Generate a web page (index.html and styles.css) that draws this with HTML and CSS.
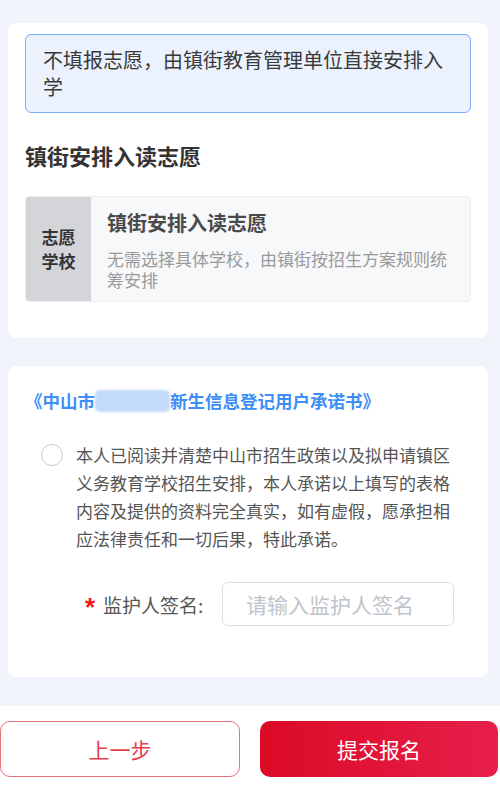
FILE: index.html
```html
<!DOCTYPE html>
<html lang="zh">
<head>
<meta charset="utf-8">
<title>志愿填报</title>
<link rel="stylesheet" href="styles.css">
</head>
<body>
<div class="page">
  <section class="card card-top">
    <div class="notice">不填报志愿，由镇街教育管理单位直接安排入学</div>
    <h2 class="section-title">镇街安排入读志愿</h2>
    <div class="option">
      <div class="option-label">志愿<br>学校</div>
      <div class="option-body">
        <div class="option-title">镇街安排入读志愿</div>
        <div class="option-desc">无需选择具体学校，由镇街按招生方案规则统筹安排</div>
      </div>
    </div>
  </section>

  <section class="card card-pledge">
    <div class="pledge-link">《中山市<span class="masked"></span>新生信息登记用户承诺书》</div>
    <div class="agree-row">
      <span class="radio"></span>
      <p class="agree-text">本人已阅读并清楚中山市招生政策以及拟申请镇区义务教育学校招生安排，本人承诺以上填写的表格内容及提供的资料完全真实，如有虚假，愿承担相应法律责任和一切后果，特此承诺。</p>
    </div>
    <div class="sign-row">
      <span class="required">*</span>
      <span class="sign-label">监护人签名:</span>
      <div class="sign-input">请输入监护人签名</div>
    </div>
  </section>
</div>
<footer class="bottom-bar">
  <button class="btn btn-prev">上一步</button>
  <button class="btn btn-submit">提交报名</button>
</footer>
</body>
</html>
```

FILE: styles.css
```css
* { box-sizing: border-box; }
html, body {
  margin: 0;
  padding: 0;
}
body {
  background: #f1f4fb;
  font-family: "Noto Sans CJK SC", "Noto Sans", sans-serif;
  color: #333;
  width: 500px;
  height: 792px;
  overflow: hidden;
  display: flex;
  flex-direction: column;
}
.page {
  padding: 23px 12px 0 8px;
  display: flex;
  flex-direction: column;
  gap: 28px;
  flex: 1;
}
.card {
  background: #fff;
  border-radius: 8px;
  padding: 11px 17px 0 17px;
}
.card-top {
  padding-bottom: 36px;
}
.notice {
  background: #ebf2fd;
  border: 1.5px solid #7cb0f8;
  border-radius: 6px;
  padding: 11px 17px 12px 17px;
  font-size: 20px;
  line-height: 27px;
  color: #3a3a3a;
}
.section-title {
  margin: 25px 0 0 0;
  font-size: 22px;
  line-height: 34px;
  font-weight: 700;
  color: #333;
}
.option {
  margin-top: 24px;
  display: flex;
  border: 1px solid #eceef2;
  border-radius: 4px;
  overflow: hidden;
  background: #f7f8fa;
}
.option-label {
  width: 65px;
  flex: none;
  background: #d4d5d9;
  display: flex;
  align-items: center;
  justify-content: center;
  text-align: center;
  font-size: 17px;
  line-height: 24px;
  font-weight: 700;
  color: #333;
}
.option-body {
  padding: 12px 17px 11px 16px;
  flex: 1;
}
.option-title {
  font-size: 20px;
  line-height: 28px;
  font-weight: 700;
  color: #4a4a4a;
}
.option-desc {
  margin-top: 12px;
  font-size: 17px;
  line-height: 20.5px;
  color: #9a9a9a;
}
.card-pledge {
  padding: 23px 17px 51px 17px;
}
.pledge-link {
  font-size: 17.5px;
  line-height: 24px;
  font-weight: 700;
  color: #3d8ef6;
  display: flex;
  align-items: center;
}
.masked {
  display: inline-block;
  width: 75px;
  height: 22px;
  background: #c3dbfb;
  border-radius: 5px;
  filter: blur(1px);
}
.agree-row {
  margin-top: 28px;
  display: flex;
  align-items: flex-start;
  padding-left: 16px;
  gap: 13px;
}
.radio {
  flex: none;
  width: 22px;
  height: 22px;
  border: 1.5px solid #c9cacf;
  border-radius: 50%;
  margin-top: 3px;
}
.agree-text {
  margin: 0;
  width: 382px;
  font-size: 17px;
  line-height: 28px;
  color: #555;
}
.sign-row {
  margin-top: 29px;
  display: flex;
  align-items: center;
  padding-left: 60px;
}
.required {
  color: #f01818;
  font-family: "Liberation Sans", sans-serif;
  font-weight: 700;
  font-size: 26px;
  line-height: 20px;
  margin-top: 6px;
  width: 18px;
}
.sign-label {
  font-size: 19px;
  color: #555;
  width: 119px;
}
.sign-input {
  width: 232px;
  height: 44px;
  border: 1px solid #dcdfe6;
  border-radius: 6px;
  padding-left: 23px;
  display: flex;
  align-items: center;
  font-size: 21px;
  color: #c0c4cc;
}
.bottom-bar {
  height: 86px;
  background: #fff;
  display: flex;
  gap: 20px;
  padding: 15px 2px 0 0;
  flex: none;
}
.btn {
  flex: 1;
  height: 56px;
  border-radius: 10px;
  font-family: "Noto Sans CJK SC", "Noto Sans", sans-serif;
  font-size: 21px;
  cursor: pointer;
}
.btn-prev {
  background: #fff;
  border: 1.5px solid #e9737c;
  color: #e4404e;
}
.btn-submit {
  border: none;
  color: #fff;
  background: linear-gradient(90deg, #db0b25 0%, #e81f4c 100%);
}
```
